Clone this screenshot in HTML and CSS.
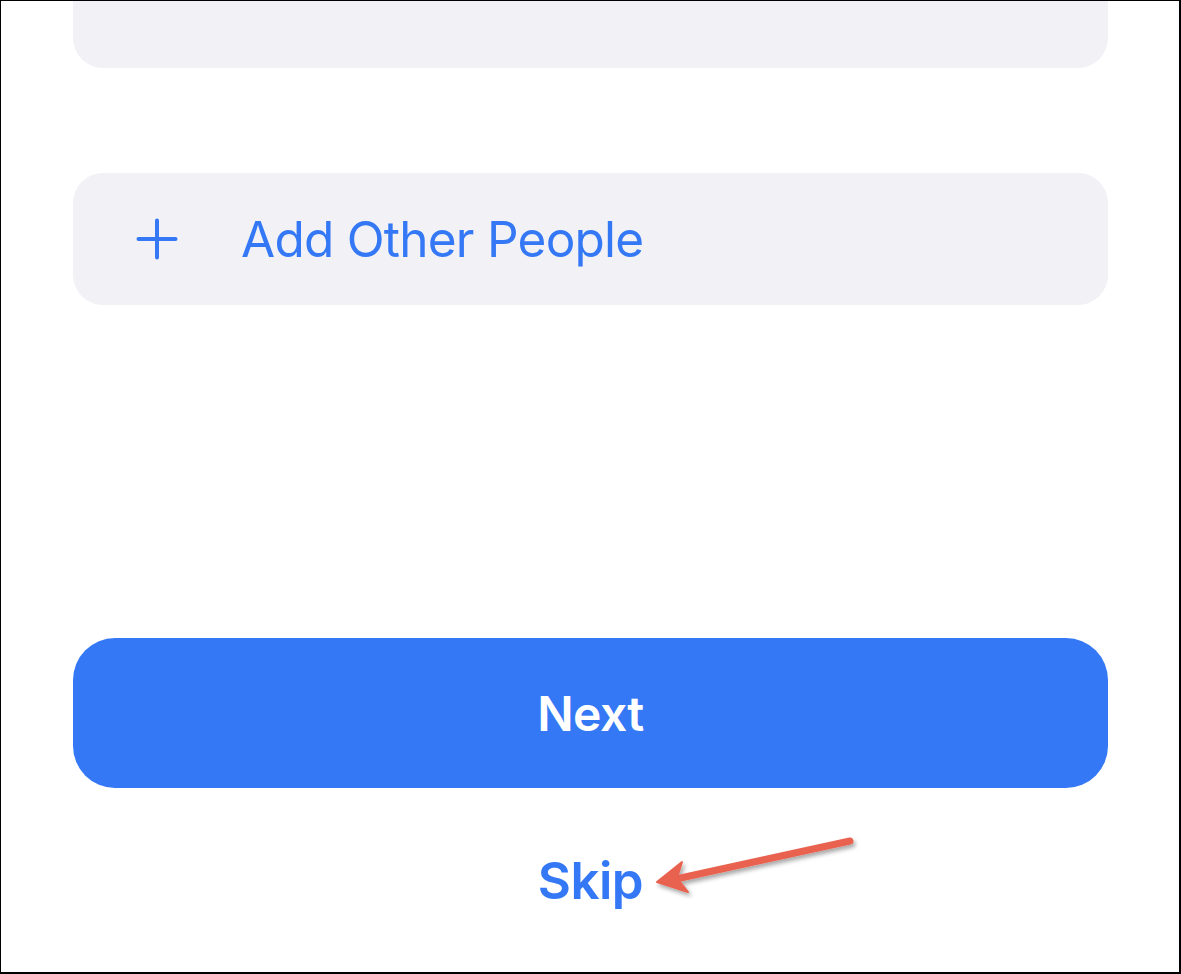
FILE: index.html
```html
<!DOCTYPE html>
<html lang="en">
<head>
<meta charset="utf-8">
<title>Add People</title>
<link rel="stylesheet" href="styles.css">
</head>
<body>
<div class="frame">
  <div class="content">
    <div class="card card-top"></div>
    <div class="card card-add">
      <span class="plus-icon">
        <svg width="42" height="42" viewBox="0 0 42 42" aria-hidden="true">
          <path d="M21 2.5V39.5M2.5 21H39.5" stroke="#3478f6" stroke-width="4" stroke-linecap="round" fill="none"/>
        </svg>
      </span>
      <span class="add-label">Add Other People</span>
    </div>
    <button class="next-btn">Next</button>
    <div class="skip-row"><span class="skip">Skip</span></div>
  </div>
  <svg class="annotation" width="220" height="80" viewBox="0 0 220 80" aria-hidden="true">
    <defs>
      <filter id="sh" x="-20%" y="-50%" width="140%" height="200%">
        <feDropShadow dx="2" dy="3" stdDeviation="2" flood-color="#000" flood-opacity="0.35"/>
      </filter>
    </defs>
    <g filter="url(#sh)" transform="translate(-650 -830)">
      <path d="M850 841 L676 879" stroke="#e8624f" stroke-width="7" stroke-linecap="round" fill="none"/>
      <path d="M657 882 L682 862 L677 878 L688 892 Z" fill="#e8624f" stroke="#e8624f" stroke-width="2" stroke-linejoin="round"/>
    </g>
  </svg>
</div>
</body>
</html>
```

FILE: styles.css
```css
html, body {
  margin: 0;
  padding: 0;
  background: #ffffff;
}

.frame {
  position: relative;
  width: 1181px;
  height: 974px;
  box-sizing: border-box;
  border-style: solid;
  border-color: #000;
  border-width: 1px 2px 2px 1px;
  overflow: hidden;
  font-family: Inter, "Noto Sans", "Liberation Sans", sans-serif;
}

.content {
  display: flex;
  flex-direction: column;
  padding: 0 71px 0 72px;
}

.card {
  background: #f1f1f6;
  border-radius: 30px;
}

.card-top {
  height: 200px;
  margin-top: -133px;
}

.card-add {
  margin-top: 105px;
  height: 132px;
  display: flex;
  align-items: center;
}

.plus-icon {
  display: flex;
  margin-left: 63px;
  width: 42px;
  height: 42px;
}

.add-label {
  margin-left: 63px;
  color: #3478f6;
  font-size: 49.5px;
  font-weight: 400;
  letter-spacing: -0.75px;
}

.next-btn {
  margin-top: 333px;
  height: 150px;
  border: none;
  border-radius: 42px;
  background: #3478f6;
  color: #fff;
  font-family: inherit;
  font-size: 48px;
  font-weight: 600;
  letter-spacing: -0.6px;
  padding: 0;
  cursor: pointer;
}

.skip-row {
  margin-top: 52px;
  height: 80px;
  display: flex;
  align-items: center;
  justify-content: center;
}

.skip {
  color: #3478f6;
  font-size: 51px;
  font-weight: 600;
  letter-spacing: -0.5px;
}

.annotation {
  position: absolute;
  left: 649px;
  top: 829px;
  overflow: visible;
}
```
